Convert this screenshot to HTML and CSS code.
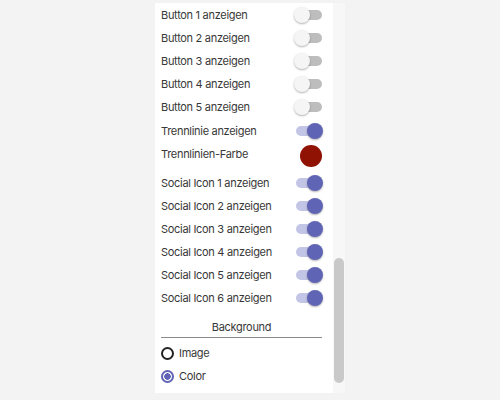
FILE: index.html
```html
<!DOCTYPE html>
<html>
<head>
<meta charset="utf-8">
<link rel="stylesheet" href="styles.css">
</head>
<body>
<div class="panel">
  <div class="content">
    <div class="row top"><span>Button 1 anzeigen</span><span class="toggle"></span></div>
    <div class="row top"><span>Button 2 anzeigen</span><span class="toggle"></span></div>
    <div class="row top"><span>Button 3 anzeigen</span><span class="toggle"></span></div>
    <div class="row top"><span>Button 4 anzeigen</span><span class="toggle"></span></div>
    <div class="row top"><span>Button 5 anzeigen</span><span class="toggle"></span></div>
    <div class="row top"><span>Trennlinie anzeigen</span><span class="toggle on"></span></div>
    <div class="row color-row"><span>Trennlinien-Farbe</span><span class="swatch"></span></div>
    <div class="row"><span>Social Icon 1 anzeigen</span><span class="toggle on"></span></div>
    <div class="row"><span>Social Icon 2 anzeigen</span><span class="toggle on"></span></div>
    <div class="row"><span>Social Icon 3 anzeigen</span><span class="toggle on"></span></div>
    <div class="row"><span>Social Icon 4 anzeigen</span><span class="toggle on"></span></div>
    <div class="row"><span>Social Icon 5 anzeigen</span><span class="toggle on"></span></div>
    <div class="row"><span>Social Icon 6 anzeigen</span><span class="toggle on"></span></div>
    <div class="section">Background</div>
    <div class="radios">
      <div class="radio-row"><span class="radio"></span><span>Image</span></div>
      <div class="radio-row"><span class="radio checked"></span><span>Color</span></div>
    </div>
  </div>
  <div class="scrollbar"><div class="thumb"></div></div>
</div>
</body>
</html>
```
FILE: styles.css
```css
html, body {
  margin: 0;
  padding: 0;
  background: #f3f3f3;
  height: 400px;
  overflow: hidden;
}
body {
  font-family: "Inter", "Roboto", sans-serif;
  font-size: 11px;
  letter-spacing: -0.3px;
  color: #383838;
}
.panel {
  margin: 3px 0 0 155px;
  width: 190px;
  height: 390px;
  background: #fff;
  display: flex;
}
.content {
  flex: 1;
  padding: 0 11px 0 6px;
}
.row {
  height: 23px;
  display: flex;
  align-items: center;
  justify-content: space-between;
}
.row.top {
  height: 23.2px;
}
.color-row {
  height: 29.8px;
  align-items: flex-start;
}
.color-row span:first-child {
  line-height: 24px;
}
.toggle {
  position: relative;
  width: 26px;
  height: 10px;
  border-radius: 5px;
  background: #bdbdbd;
}
.toggle::after {
  content: "";
  position: absolute;
  left: -2px;
  top: -3px;
  width: 16px;
  height: 16px;
  border-radius: 50%;
  background: #f5f5f5;
  box-shadow: 0 1px 2px rgba(0,0,0,0.3);
}
.toggle.on {
  background: #c3c5e6;
}
.toggle.on::after {
  left: 11px;
  background: #5f64b5;
}
.swatch {
  width: 22px;
  height: 22px;
  border-radius: 50%;
  background: #8f1202;
  margin-top: 3px;
}
.section {
  margin-top: 9px;
  text-align: center;
  padding-bottom: 2px;
  border-bottom: 1px solid #8a8a8a;
  line-height: 16px;
}
.radios {
  margin-top: 4px;
}
.radio-row {
  height: 23px;
  display: flex;
  align-items: center;
  gap: 5px;
}
.radio {
  width: 9px;
  height: 9px;
  border: 2px solid #222;
  border-radius: 50%;
  background: #fff;
}
.radio.checked {
  border-color: #5f64b5;
  background: radial-gradient(circle, #5f64b5 0 3px, #fff 3.5px);
}
.scrollbar {
  width: 12px;
  background: #f7f7f7;
  display: flex;
  flex-direction: column;
  justify-content: flex-end;
  padding-bottom: 10px;
  box-sizing: border-box;
}
.thumb {
  margin: 0 1px;
  height: 125px;
  border-radius: 5px;
  background: #c9c9c9;
}
```
